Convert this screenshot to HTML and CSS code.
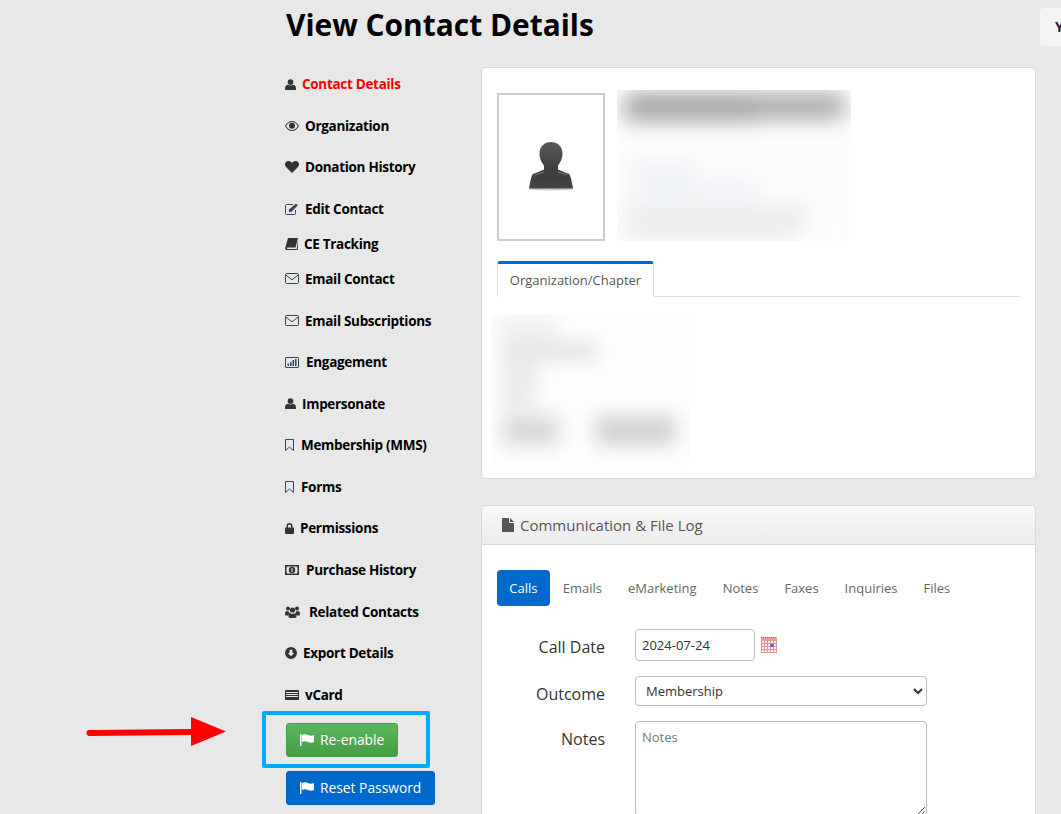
FILE: index.html
```html
<!DOCTYPE html>
<html lang="en">
<head>
<meta charset="utf-8">
<title>View Contact Details</title>
<link rel="stylesheet" href="styles.css">
</head>
<body>
<div class="page">
  <h1 class="title">View Contact Details</h1>
  <div class="columns">
    <nav class="sidebar">
      <a class="nav-item active"><span class="ic w17"><svg width="11" height="11" viewBox="0 0 13 13"><circle cx="6.5" cy="3.7" r="3.300"/><path d="M1 13c-.8 0-1-.5-1-1.300C0 9 1 7 3.300 6.800c1.800 1.200 4.600 1.200 6.400 0C12 7 13 9 13 11.700c0 .8-.2 1.300-1 1.300z"/></svg></span>Contact Details</a>
      <a class="nav-item"><span class="ic w20"><svg width="14" height="10" viewBox="0 0 14 10"><path d="M7 0C4 0 1.500 2 0 5c1.500 3 4 5 7 5s5.500-2 7-5c-1.500-3-4-5-7-5zm0 1c2.500 0 4.500 1.600 5.800 4C11.500 7.400 9.500 9 7 9S2.500 7.400 1.200 5C2.500 2.600 4.500 1 7 1z"/><circle cx="7" cy="4.800" r="3"/></svg></span>Organization</a>
      <a class="nav-item"><span class="ic w20"><svg width="14" height="12" viewBox="0 0 14 12"><path d="M7 12 1 6C-.4 4.500-.3 2 1.100.9 2.600-.4 5.200-.2 7 2 8.800-.2 11.400-.4 12.900.9 14.300 2 14.400 4.500 13 6z"/></svg></span>Donation History</a>
      <a class="nav-item short"><span class="ic w20 blue"><svg width="14" height="12" viewBox="0 0 14 12"><path class="line" d="M10.500 7v3.500a1 1 0 0 1-1 1h-8a1 1 0 0 1-1-1v-8a1 1 0 0 1 1-1H8"/><path d="M4 6.500 10.700.8c.5-.4 2.200 1 1.900 1.600L6.600 8.700 3.800 9z"/></svg></span>Edit Contact</a>
      <a class="nav-item short"><span class="ic w19"><svg width="13" height="12" viewBox="0 0 13 12"><path d="M3 0h9.500c.4 0 .5.300.4.700L10.500 9.500H2.700c-1 0-1 1.500 0 1.500h8.600c.3 0 .5-.2.600-.5L13 2v8.500c0 .8-.5 1.500-1.300 1.500H1.500C.5 12 0 11 .2 10z"/></svg></span>CE Tracking</a>
      <a class="nav-item"><span class="ic w20 blue"><svg width="14" height="11" viewBox="0 0 14 11"><path class="line" d="M1.500.5h11a1 1 0 0 1 1 1v8a1 1 0 0 1-1 1h-11a1 1 0 0 1-1-1v-8a1 1 0 0 1 1-1zM.8 2 7 6.800 13.200 2"/></svg></span>Email Contact</a>
      <a class="nav-item"><span class="ic w20 blue"><svg width="14" height="11" viewBox="0 0 14 11"><path class="line" d="M1.500.5h11a1 1 0 0 1 1 1v8a1 1 0 0 1-1 1h-11a1 1 0 0 1-1-1v-8a1 1 0 0 1 1-1zM.8 2 7 6.800 13.200 2"/></svg></span>Email Subscriptions</a>
      <a class="nav-item"><span class="ic w21 blue"><svg width="14" height="11" viewBox="0 0 14 11"><path class="line" d="M1 .5h12a.5.5 0 0 1 .5.500v9a.5.5 0 0 1-.5.500H1a.5.5 0 0 1-.5-.500V1A.5.5 0 0 1 1 .5z"/><path d="M2.500 6.500h1.500v2.500H2.500zM5 5h1.500v4H5zM7.500 3h1.500v6H7.500zM10 2h1.500v7H10z"/></svg></span>Engagement</a>
      <a class="nav-item"><span class="ic w17"><svg width="11" height="11" viewBox="0 0 13 13"><circle cx="6.500" cy="3.700" r="3.300"/><path d="M1 13c-.8 0-1-.5-1-1.300C0 9 1 7 3.300 6.800c1.800 1.200 4.600 1.200 6.400 0C12 7 13 9 13 11.700c0 .8-.2 1.300-1 1.300z"/></svg></span>Impersonate</a>
      <a class="nav-item"><span class="ic w16 blue"><svg width="9" height="12" viewBox="0 0 9 12"><path class="line" d="M.5.500h8v11L4.500 8 .5 11.500z"/></svg></span>Membership (MMS)</a>
      <a class="nav-item"><span class="ic w16 blue"><svg width="9" height="12" viewBox="0 0 9 12"><path class="line" d="M.5.500h8v11L4.500 8 .5 11.500z"/></svg></span>Forms</a>
      <a class="nav-item"><span class="ic w15"><svg width="9" height="11" viewBox="0 0 9 11"><path d="M1.500 4.500V3a3 3 0 0 1 6 0v1.500h.6c.5 0 .9.400.9.900v4.700c0 .5-.4.900-.9.900H.9c-.5 0-.9-.4-.9-.9V5.400c0-.5.400-.9.900-.9zm1.500 0h3V3a1.500 1.500 0 0 0-3 0z"/></svg></span>Permissions</a>
      <a class="nav-item"><span class="ic w21"><svg width="14" height="10" viewBox="0 0 14 10"><path fill-rule="evenodd" d="M0 0h14v10H0zM2.500 1.500 1.500 2.500v5l1 1h9l1-1v-5l-1-1z"/><circle cx="7" cy="5" r="3.200"/><path fill="#e8e8e8" d="M6.500 3h1v4h-1z"/></svg></span>Purchase History</a>
      <a class="nav-item"><span class="ic w24"><svg width="15" height="12" viewBox="0 0 15 12"><circle cx="3" cy="2.500" r="2"/><circle cx="12" cy="2.500" r="2"/><circle cx="7.500" cy="4" r="2.600"/><path d="M0 8c0-2 .8-3 2-3 .6.400 1.200.5 2 .4.100 1.100.5 1.800 1 2.300-1 .4-1.600 1-1.900 1.800H1C.3 9.500 0 9 0 8zM15 8c0-2-.8-3-2-3-.6.400-1.200.5-2 .4-.1 1.100-.5 1.800-1 2.300 1 .4 1.600 1 1.900 1.800H14c.7 0 1-.5 1-1.500zM5.500 7.300c1.200.8 2.800.8 4 0 1.200.1 2 1.200 2 3 0 1.100-.5 1.700-1.500 1.700H5c-1 0-1.500-.6-1.500-1.700 0-1.800.8-2.900 2-3z"/></svg></span>Related Contacts</a>
      <a class="nav-item"><span class="ic w18"><svg width="12" height="12" viewBox="0 0 13 13"><path fill-rule="evenodd" d="M6.500 0a6.500 6.500 0 1 1 0 13 6.500 6.500 0 0 1 0-13zM5 3v3.500H3l3.500 3.500L10 6.500H8V3z"/></svg></span>Export Details</a>
      <a class="nav-item"><span class="ic w20"><svg width="14" height="10" viewBox="0 0 14 10"><path fill-rule="evenodd" d="M.7 0h12.600c.4 0 .7.300.7.700v8.600c0 .4-.3.700-.7.700H.7C.3 10 0 9.700 0 9.300V.7C0 .3.300 0 .7 0zM1 2v1h12V2zM1 4v1h12V4zM1 6v1h12V6z"/></svg></span>vCard</a>
      <div class="actions">
        <button class="btn btn-green"><svg class="flag" width="14" height="12" viewBox="0 0 14 12"><path d="M0 0h1.500v12H0zM2 1c2-1 4-1 6 0s4 .8 6 0v7c-2 .9-4 1-6 0s-4-.9-6 0z"/></svg>Re-enable</button>
        <button class="btn btn-blue"><svg class="flag" width="14" height="12" viewBox="0 0 14 12"><path d="M0 0h1.500v12H0zM2 1c2-1 4-1 6 0s4 .8 6 0v7c-2 .9-4 1-6 0s-4-.9-6 0z"/></svg>Reset Password</button>
      </div>
    </nav>
    <main class="content">
      <section class="card card-profile">
        <div class="profile">
          <div class="photo">
            <svg width="50" height="52" viewBox="0 0 50 52"><defs><linearGradient id="avatar" x1="0" y1="0" x2="0" y2="1"><stop offset="0" stop-color="#5a5a5a"/><stop offset="0.6" stop-color="#3c3c3c"/><stop offset="1" stop-color="#444"/></linearGradient></defs><ellipse cx="25" cy="48" rx="23" ry="1.500" fill="#ccc"/><path fill="url(#avatar)" d="M25 1c6.500 0 11.500 4.500 11.500 11.500 0 5.500-2.500 9.500-4.500 12v4l7 3 4 1.500c1.500 1 3 8 4 14.500H3c1-6.500 2.500-13.500 4-14.500l4-1.500 7-3v-4c-2-2.500-4.500-6.500-4.500-12C13.500 5.500 18.500 1 25 1z"/><path d="M9 34l9-3M41 34l-9-3" stroke="#777" fill="none"/></svg>
          </div>
          <div class="blur-box">
            <div class="blur-inner">
              <span class="smear smear-a"></span><span class="smear smear-b"></span>
              <span class="smear smear-c"></span><span class="smear smear-d"></span>
              <span class="smear smear-e"></span><span class="smear smear-f"></span>
            </div>
          </div>
        </div>
        <div class="tabline"><span class="tab">Organization/Chapter</span></div>
        <div class="blur-org">
          <div class="blur-org-inner">
            <span class="smear org-a"></span><span class="smear org-b"></span>
            <span class="smear org-c"></span><span class="smear org-d"></span>
            <span class="smear org-e"></span><span class="smear org-f"></span>
          </div>
        </div>
      </section>
      <section class="card card-log">
        <header class="card-head"><svg width="12" height="14" viewBox="0 0 12 14"><path d="M0 .6C0 .3.300 0 .6 0H7v4.300c0 .4.300.7.700.7H12v8.400c0 .3-.3.600-.6.600H.6c-.3 0-.6-.3-.6-.6zM8 0l4 4H8z"/></svg>Communication &amp; File Log</header>
        <div class="card-body">
          <ul class="pills">
            <li class="pill pill-active">Calls</li>
            <li class="pill">Emails</li>
            <li class="pill">eMarketing</li>
            <li class="pill">Notes</li>
            <li class="pill">Faxes</li>
            <li class="pill">Inquiries</li>
            <li class="pill">Files</li>
          </ul>
          <form class="form">
            <label class="lbl lbl-date">Call Date</label>
            <div class="date-row">
              <input class="field field-date" type="text" value="2024-07-24">
              <svg width="16" height="16" viewBox="0 0 16 16"><rect width="16" height="16" fill="#fdf3f3"/><rect width="16" height="4" fill="#ee9a9a"/><path d="M0 .5h16" stroke="#c55" stroke-dasharray="1 1"/><path d="M.5 4v12M3.500 4v12M6.500 4v12M9.500 4v12M12.500 4v12M15.500 4v12M0 6.500h16M0 9.500h16M0 12.500h16M0 15.500h16" stroke="#eb8f8f"/><rect x="9.500" y="7" width="3" height="3" fill="#3a6fd8"/></svg>
            </div>
            <label class="lbl">Outcome</label>
            <select class="field field-select"><option>Membership</option></select>
            <label class="lbl lbl-notes">Notes</label>
            <textarea class="field field-notes" placeholder="Notes"></textarea>
          </form>
        </div>
      </section>
    </main>
  </div>
  <div class="corner-box">Y</div>
  <div class="highlight"></div>
  <svg class="arrow" width="142" height="30" viewBox="0 0 142 30"><path d="M5.500 16 108 15" stroke="#f00" stroke-width="6" stroke-linecap="round"/><path d="M107 0 142 14.500 107 29z" fill="#f00"/></svg>
</div>
</body>
</html>
```
FILE: styles.css
```css
* { box-sizing: border-box; }
html, body { margin: 0; height: 100%; }
body {
  background: #e8e8e8;
  color: #333;
  font-family: "Open Sans", "Liberation Sans", sans-serif;
  font-size: 13px;
  overflow: hidden;
}
.page { position: relative; height: 814px; overflow: hidden; padding-left: 285px; }
.title {
  margin: 0;
  padding: 4px 0 0 1px;
  height: 67px;
  font-size: 29.900px;
  line-height: 42px;
  font-weight: 700;
  color: #000;
}
.columns { display: flex; }
.sidebar { width: 196px; padding-top: 6.400px; flex: none; }
.nav-item {
  display: flex;
  align-items: center;
  height: 21.500px;
  margin-bottom: 20.100px;
  font-size: 13.500px;
  letter-spacing: -.3px;
  font-weight: 700;
  color: #000;
  white-space: nowrap;
}
.nav-item.short { margin-bottom: 13.500px; }
.nav-item.active { color: #f00; }
.ic { display: flex; align-items: center; flex: none; }
.ic svg { fill: #333; display: block; }
.ic .line { fill: none; stroke: #33465c; stroke-width: 1; }
.ic.blue svg { fill: #33465c; }
.w15 { width: 15px; } .w16 { width: 16px; } .w17 { width: 17px; } .w18 { width: 18px; }
.w19 { width: 19px; } .w20 { width: 20px; } .w21 { width: 21px; } .w24 { width: 24px; }
.nav-item:nth-last-child(2) { margin-bottom: 17.100px; }
.actions { display: flex; flex-direction: column; align-items: flex-start; gap: 14px; padding-left: 1px; }
.btn {
  display: inline-flex;
  align-items: center;
  gap: 6px;
  height: 34px;
  padding: 0 13px;
  border-radius: 3px;
  font: 400 13.800px "Open Sans", sans-serif;
  color: #fff;
  cursor: pointer;
}
.flag { fill: #fff; flex: none; }
.btn-green { background: linear-gradient(#5cb85c, #449d44); border: 1px solid #479f47; }
.btn-blue { background: #0069cc; border: 1px solid #0060bb; }
.content { width: 555px; flex: none; }
.card { background: #fff; border: 1px solid #d8d8d8; border-radius: 5px; }
.card-profile { height: 412px; padding: 25px 15px 0; margin-bottom: 26px; position: relative; }
.profile { display: flex; gap: 12px; }
.photo {
  width: 108px;
  height: 148px;
  border: 2px solid #ccc;
  display: flex;
  align-items: center;
  justify-content: center;
  flex: none;
}
.blur-box { width: 234px; height: 151px; margin-top: -3px; overflow: hidden; background: #fff; }
.blur-inner { position: relative; width: 100%; height: 100%; background: #fcfcfc; filter: blur(10px); transform: scale(1.080); }
.smear { position: absolute; display: block; }
.smear-a { left: 16px; top: 9px; width: 122px; height: 25px; background: #a0a0a0; }
.smear-b { left: 135px; top: 9px; width: 84px; height: 23px; background: #a6a6a6; }
.smear-c { left: 22px; top: 72px; width: 60px; height: 14px; background: #eceff2; }
.smear-d { left: 22px; top: 92px; width: 120px; height: 12px; background: #e8edf2; }
.smear-e { left: 16px; top: 114px; width: 170px; height: 14px; background: #e6e6e6; }
.smear-f { left: 16px; top: 132px; width: 160px; height: 12px; background: #e8e8e8; }
.tabline { margin-top: 20px; height: 36px; border-bottom: 1px solid #ddd; }
.tab {
  display: block;
  width: 157px;
  height: 36px;
  padding-top: 7px;
  border: 1px solid #ddd;
  border-top: 3px solid #0069cc;
  border-bottom-color: #fff;
  border-radius: 3px 3px 0 0;
  background: #fff;
  text-align: center;
  color: #555;
  line-height: 18px;
}
.blur-org {
  position: absolute;
  left: 9px;
  top: 246px;
  width: 199px;
  height: 152px;
  overflow: hidden;
  background: #fff;
}
.blur-org-inner { position: relative; width: 100%; height: 100%; background: #fdfdfd; filter: blur(9px); transform: scale(1.060); }
.org-a { left: 12px; top: 10px; width: 56px; height: 16px; background: #ebebeb; }
.org-b { left: 16px; top: 33px; width: 90px; height: 13px; background: #d8d8d8; }
.org-c { left: 16px; top: 55px; width: 34px; height: 13px; background: #dcdcdc; }
.org-d { left: 16px; top: 77px; width: 30px; height: 13px; background: #dcdcdc; }
.org-e { left: 16px; top: 100px; width: 54px; height: 28px; background: #d8d8d8; }
.org-f { left: 104px; top: 100px; width: 76px; height: 28px; background: #d2d2d2; }
.card-log { height: 400px; }
.card-head {
  display: flex;
  align-items: center;
  gap: 6px;
  height: 39px;
  padding-left: 20px;
  background: linear-gradient(#f8f8f8, #ebebeb);
  border-bottom: 1px solid #d8d8d8;
  border-radius: 5px 5px 0 0;
  font-size: 15px;
  color: #555;
}
.card-head svg { fill: #555; flex: none; }
.card-body { padding: 25px 15px; }
.pills { display: flex; list-style: none; margin: 0 0 23px; padding: 0; }
.pill { height: 36px; line-height: 36px; padding: 0 13px; color: #666; border-radius: 4px; }
.pill-active { padding: 0 12.300px; background: #0069cc; color: #fff; }
.form { display: grid; grid-template-columns: 108px 292px; column-gap: 30px; row-gap: 15px; align-items: start; }
.lbl { font-size: 16px; line-height: 22px; color: #333; text-align: right; padding-top: 7px; }
.date-row { display: flex; align-items: center; gap: 6px; }
.field {
  border: 1px solid #bbb;
  border-radius: 4px;
  background: #fff;
  font: 400 13px "Open Sans", sans-serif;
  color: #333;
  outline: none;
}
.field-date { width: 120px; height: 32px; padding: 0 6px; }
.field-select { width: 292px; height: 30px; padding: 0 6px; }
.field-notes { width: 292px; height: 95px; padding: 6px; display: block; }
.field-notes::placeholder { color: #777; opacity: 1; }
.corner-box {
  position: absolute;
  left: 1040px;
  top: 8px;
  width: 40px;
  height: 38px;
  padding: 10px 15px;
  background: #f3f3f3;
  border-radius: 4px;
  font-size: 14px;
  line-height: 18px;
  font-weight: 700;
  color: #222;
}
.highlight {
  position: absolute;
  left: 262px;
  top: 711px;
  width: 168px;
  height: 57px;
  border: 4px solid #0af;
  border-radius: 2px;
}
.arrow { position: absolute; left: 84px; top: 717px; }
```
